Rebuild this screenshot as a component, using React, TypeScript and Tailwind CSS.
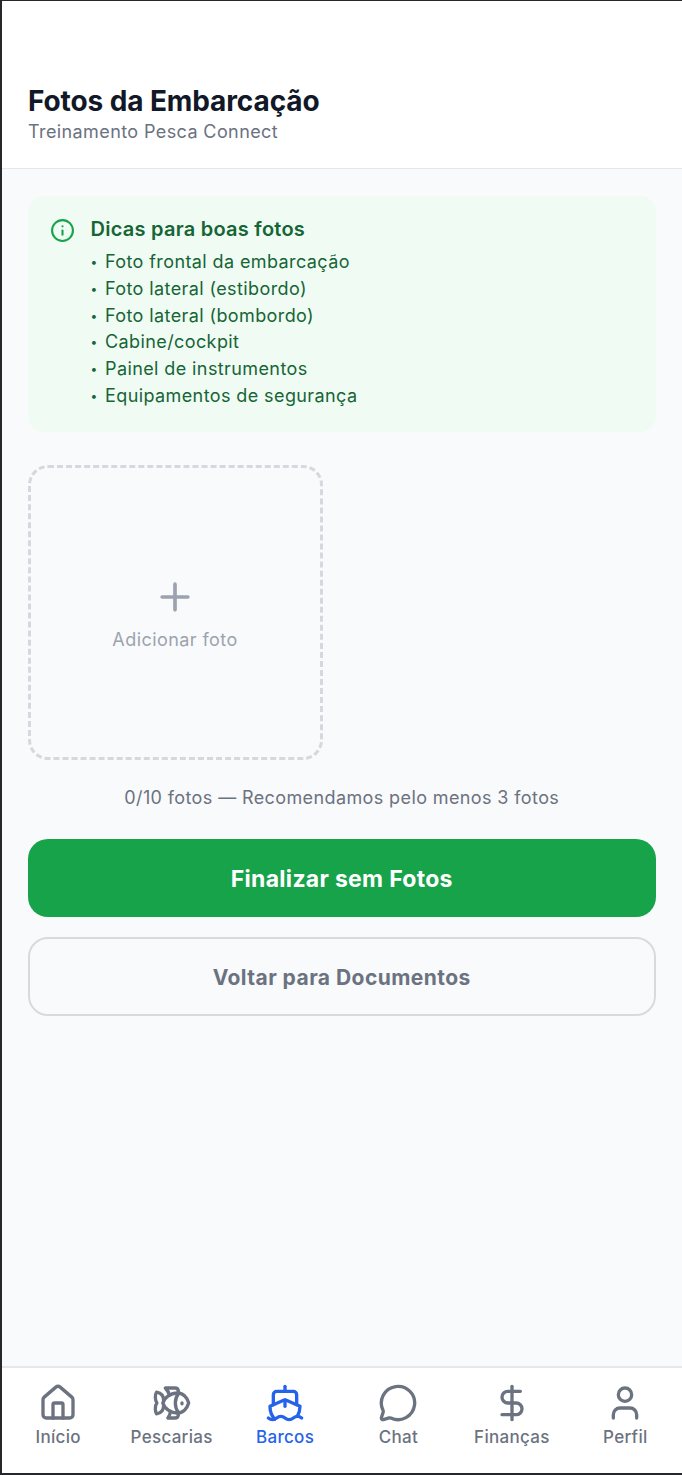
import { Fish, House, Info, MessageCircle, Plus, Ship, DollarSign, User } from 'lucide-react';

const tips = [
  'Foto frontal da embarcação',
  'Foto lateral (estibordo)',
  'Foto lateral (bombordo)',
  'Cabine/cockpit',
  'Painel de instrumentos',
  'Equipamentos de segurança',
];

const tabs = [
  { label: 'Início', icon: House },
  { label: 'Pescarias', icon: Fish },
  { label: 'Barcos', icon: Ship, active: true },
  { label: 'Chat', icon: MessageCircle },
  { label: 'Finanças', icon: DollarSign },
  { label: 'Perfil', icon: User },
];

export default function App() {
  return (
    <div className="h-[1475px] bg-[#26272b] pt-px pb-[2px] pl-[1.5px] font-['Inter',sans-serif] overflow-hidden">
      <div className="flex h-full flex-col bg-[#f9fafb]">
        {/* Header */}
        <header className="h-[168px] shrink-0 border-b border-[#e5e7eb] bg-white pl-[26.5px] pt-[85px]">
          <h1 className="text-[28px] leading-[30px] font-bold tracking-[-0.1px] text-[#111827]">Fotos da Embarcação</h1>
          <p className="pt-px text-[18px] leading-[30px] tracking-[0.4px] text-[#6b7280]">Treinamento Pesca Connect</p>
        </header>

        <main className="flex flex-1 flex-col px-[26px] pt-[27px]">
          {/* Tips */}
          <div className="flex h-[236px] gap-[16px] rounded-2xl bg-[#f0fbf4] px-[22px] pt-[20px]">
            <Info className="mt-[2px] h-[25px] w-[25px] shrink-0 text-[#16a34a]" strokeWidth={2} />
            <div>
              <h2 className="text-[20px] leading-[26px] font-semibold tracking-[0.25px] text-[#166534]">Dicas para boas fotos</h2>
              <ul className="mt-[7px]">
                {tips.map((tip) => (
                  <li key={tip} className="flex text-[18px] leading-[26.8px] tracking-[0.4px] text-[#166534]">
                    <span className="w-[14.5px] text-[12px]">•</span>
                    {tip}
                  </li>
                ))}
              </ul>
            </div>
          </div>

          {/* Upload */}
          <button className="mt-[33px] flex h-[295px] w-[295px] flex-col items-center justify-center rounded-[20px] border-[3px] border-dashed border-[#d5d8de] pt-[2px]">
            <Plus className="h-[44px] w-[44px] text-[#9ca3af]" strokeWidth={2} />
            <span className="mt-[7px] text-[18px] leading-[27px] tracking-[0.43px] text-[#9ca3af]">Adicionar foto</span>
          </button>

          <p className="mt-[24px] text-center text-[18px] leading-[27px] tracking-[0.39px] text-[#6b7280]">
            0/10 fotos — Recomendamos pelo menos 3 fotos
          </p>

          <button className="mt-[28px] h-[78px] rounded-[20px] bg-[#16a34a] pt-[2px] text-[23px] font-bold tracking-[0.3px] text-white">
            Finalizar sem Fotos
          </button>
          <button className="mt-[20px] h-[79px] rounded-[20px] border-2 border-[#d8dae0] pt-[2px] text-[21px] font-bold tracking-[0.45px] text-[#6b7280]">
            Voltar para Documentos
          </button>
        </main>

        {/* Bottom nav */}
        <nav className="flex h-[107px] shrink-0 border-t-2 border-[#e5e7eb] bg-white pt-[15px]">
          {tabs.map(({ label, icon: Icon, active }) => (
            <div key={label} className={`flex flex-1 flex-col items-center ${active ? 'text-[#2563eb]' : 'text-[#6b7280]'}`}>
              <Icon className="h-[40px] w-[40px]" strokeWidth={2} />
              <span className="pt-[2px] text-[17px] leading-[24px] font-medium tracking-[0.3px]">{label}</span>
            </div>
          ))}
        </nav>
      </div>
    </div>
  );
}
